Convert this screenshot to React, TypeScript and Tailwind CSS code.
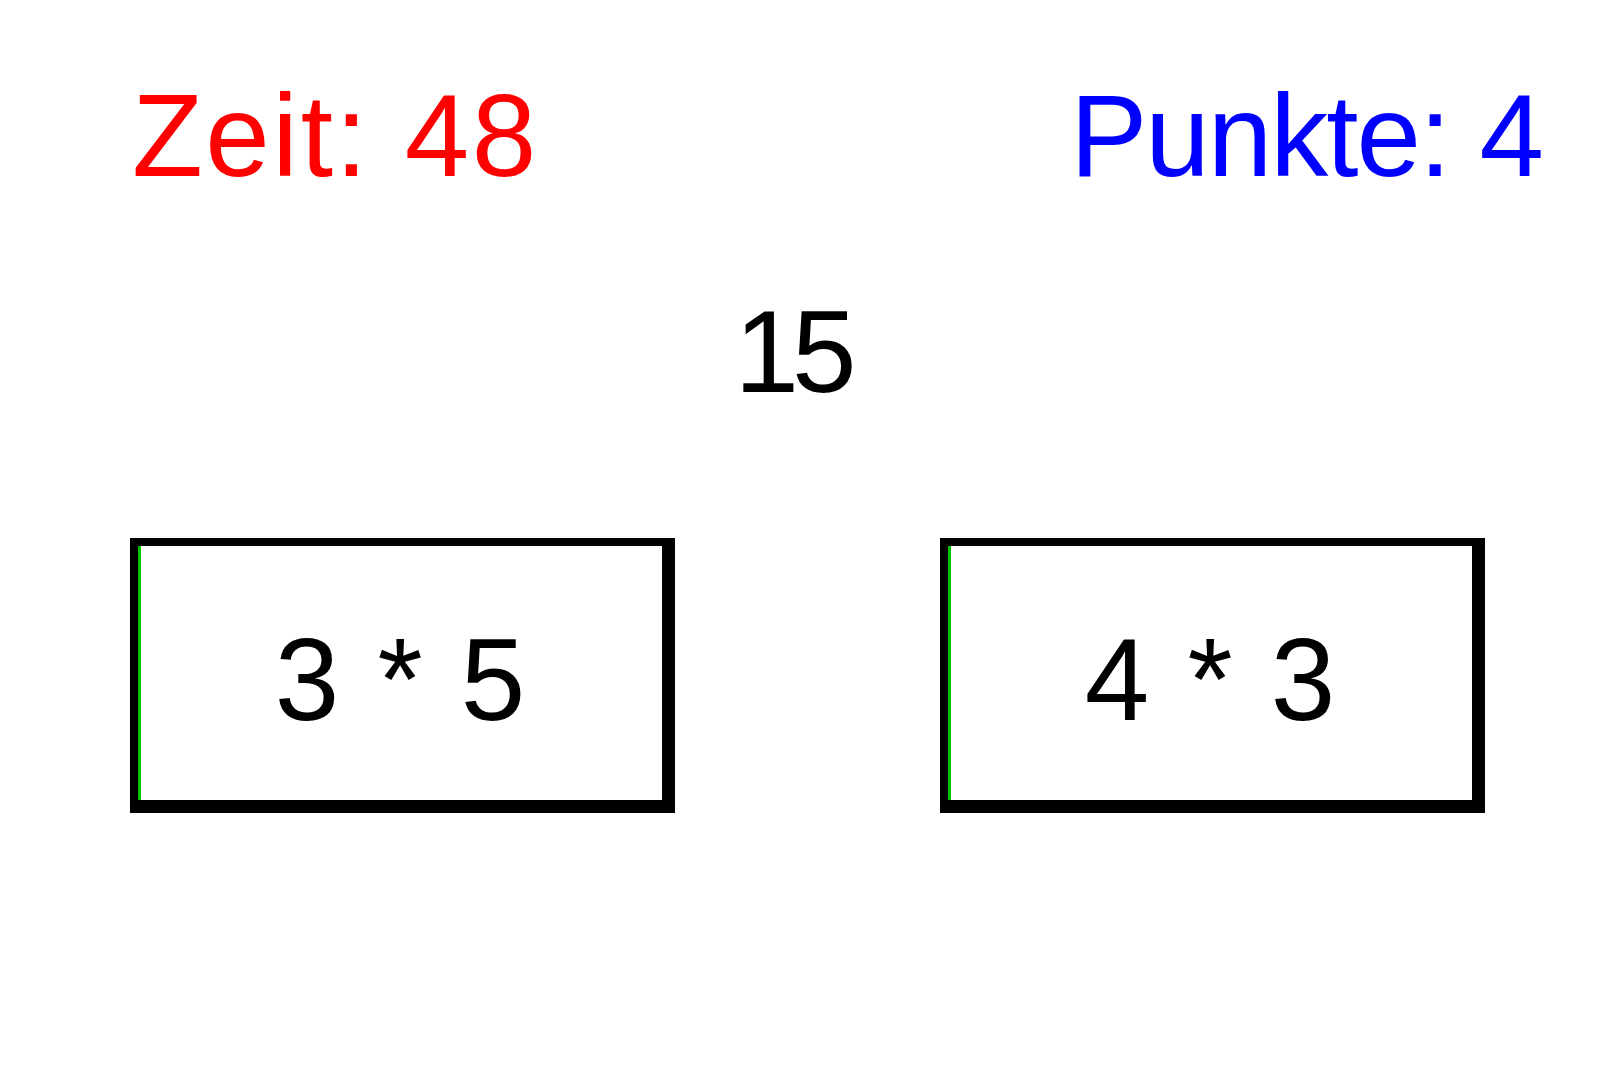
import React from "react";

// Multiplication quiz screen: timer, score, target number and two answer cards.
const font = { fontFamily: '"Comic Sans MS", "Liberation Sans", Arial, sans-serif' };

function AnswerCard({ label }: { label: string }) {
  return (
    <div className="h-[275px] w-[545px] border-[8px] border-b-[13px] border-r-[13px] border-black bg-white">
      <div className="flex h-full items-center justify-center border-l-[3px] border-[#00c400] pt-[14px]">
        <span className="text-[116px] leading-none tracking-[3px] text-black">{label}</span>
      </div>
    </div>
  );
}

export default function App() {
  return (
    <div className="h-[1080px] w-[1614px] overflow-hidden bg-white" style={font}>
      <div className="flex items-start justify-between pl-[132px] pr-[72px] pt-[78px]">
        <span className="text-[116px] leading-none tracking-[2.5px] text-[#ff0000]">Zeit: 48</span>
        <span className="text-[116px] leading-none tracking-[-2px] text-[#0000ff]">Punkte: 4</span>
      </div>

      <div className="flex justify-center pr-[30px] pt-[100px]">
        <span className="text-[116px] leading-none tracking-[-7px] text-black">15</span>
      </div>

      <div className="flex gap-[265px] pl-[130px] pt-[128px]">
        <AnswerCard label="3 * 5" />
        <AnswerCard label="4 * 3" />
      </div>
    </div>
  );
}
